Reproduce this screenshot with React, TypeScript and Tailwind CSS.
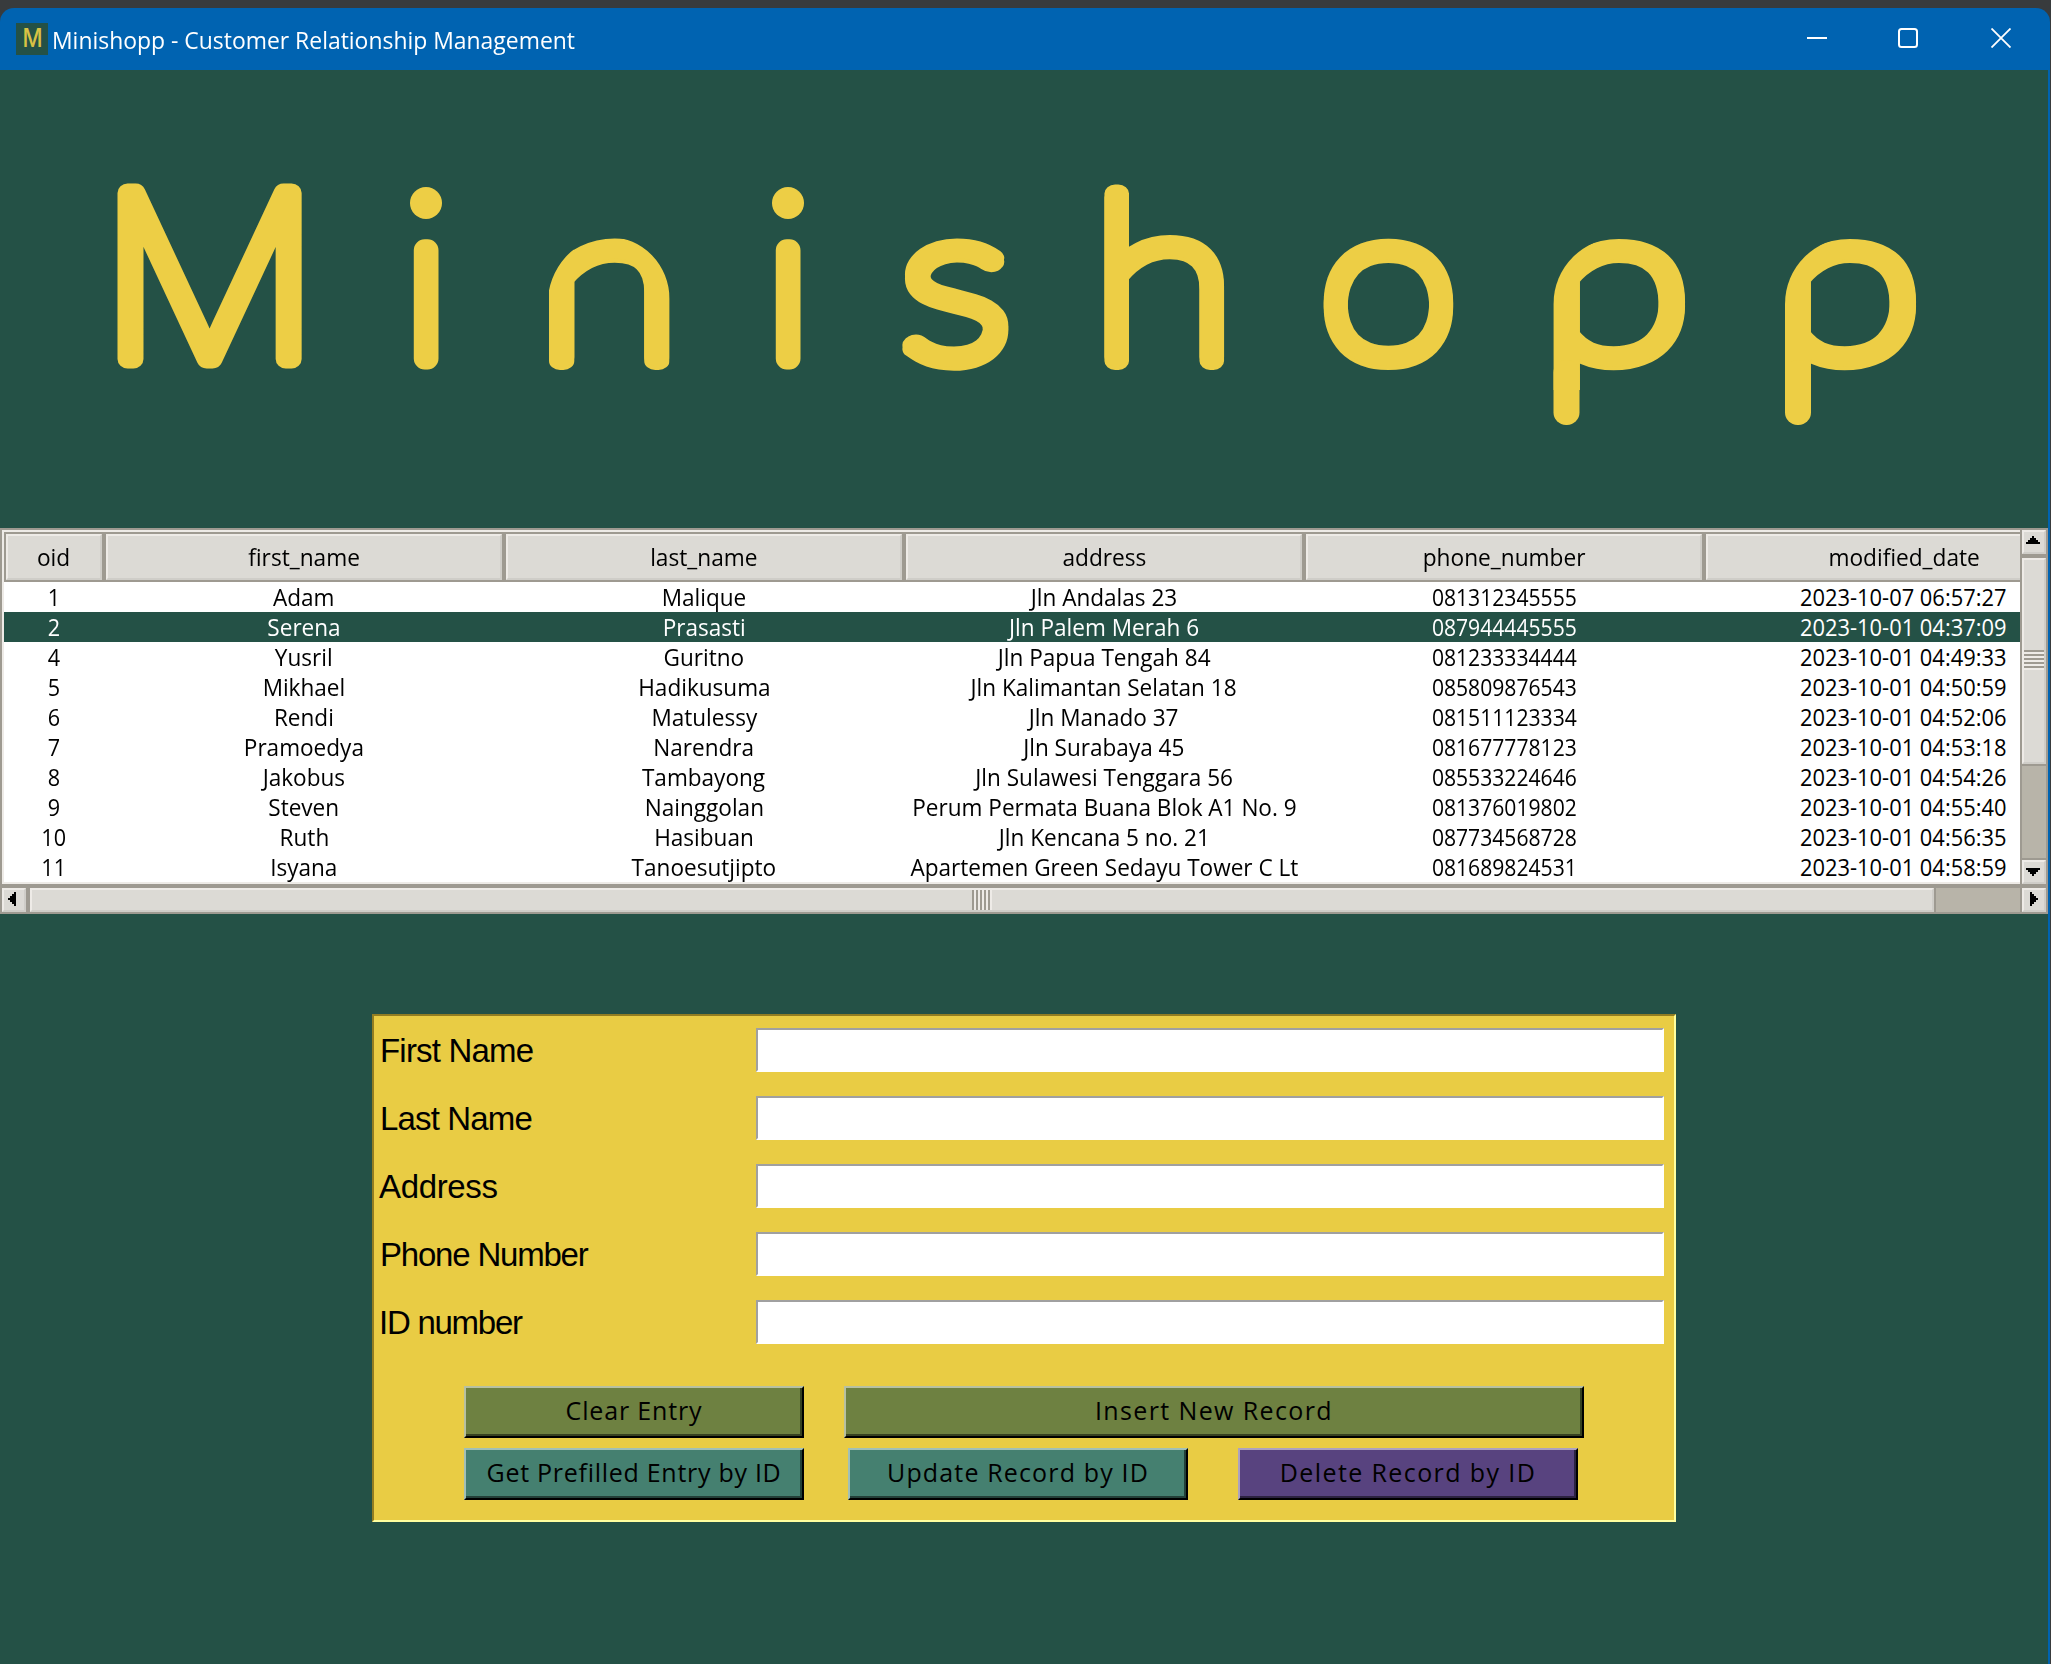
import React from "react";

const COLUMNS = ["oid", "first_name", "last_name", "address", "phone_number", "modified_date"];

const ROWS: string[][] = [
  ["1", "Adam", "Malique", "Jln Andalas 23", "081312345555", "2023-10-07 06:57:27"],
  ["2", "Serena", "Prasasti", "Jln Palem Merah 6", "087944445555", "2023-10-01 04:37:09"],
  ["4", "Yusril", "Guritno", "Jln Papua Tengah 84", "081233334444", "2023-10-01 04:49:33"],
  ["5", "Mikhael", "Hadikusuma", "Jln Kalimantan Selatan 18", "085809876543", "2023-10-01 04:50:59"],
  ["6", "Rendi", "Matulessy", "Jln Manado 37", "081511123334", "2023-10-01 04:52:06"],
  ["7", "Pramoedya", "Narendra", "Jln Surabaya 45", "081677778123", "2023-10-01 04:53:18"],
  ["8", "Jakobus", "Tambayong", "Jln Sulawesi Tenggara 56", "085533224646", "2023-10-01 04:54:26"],
  ["9", "Steven", "Nainggolan", "Perum Permata Buana Blok A1 No. 9", "081376019802", "2023-10-01 04:55:40"],
  ["10", "Ruth", "Hasibuan", "Jln Kencana 5 no. 21", "087734568728", "2023-10-01 04:56:35"],
  ["11", "Isyana", "Tanoesutjipto", "Apartemen Green Sedayu Tower C Lt", "081689824531", "2023-10-01 04:58:59"],
];

const CELL_SCALE = ["scale-x-[0.9]", "scale-x-[0.94]", "scale-x-[0.94]", "scale-x-[0.94]", "scale-x-[0.88]", "-translate-x-px scale-x-[0.912]"];

const GRID = "grid w-[2100px] grid-cols-[100px_400px_400px_400px_400px_400px]";
const RAISED = "border-2 border-t-[#eeebe7] border-l-[#eeebe7] border-r-[#cfcdc8] border-b-[#cfcdc8] bg-[#dcdad5]";

function TitleBar() {
  return (
    <header className="flex h-[62px] w-[2050px] shrink-0 items-center rounded-t-[14px] bg-[#0063b1] pl-4">
      <svg width="32" height="32" viewBox="0 0 32 32" className="shrink-0">
        <rect width="32" height="32" fill="#245146" />
        <text transform="translate(16.5 24) scale(0.88 1)" textAnchor="middle" fontFamily="Inter" fontSize="25" fontWeight="500" fill="#d8c244">M</text>
      </svg>
      <h1 className="mt-[2px] ml-1 origin-left scale-x-[0.955] text-[24px] leading-[32px] whitespace-pre text-white">
        Minishopp - Customer Relationship Management
      </h1>
      <div className="mr-[39px] ml-auto flex -translate-y-px text-white">
        <svg className="mr-[71px]" width="20" height="20" viewBox="0 0 20 20"><path d="M0 10H20" stroke="currentColor" strokeWidth="2" /></svg>
        <svg className="mr-[73px]" width="20" height="20" viewBox="0 0 20 20"><rect x="1" y="1" width="18" height="18" rx="2.5" fill="none" stroke="currentColor" strokeWidth="2" /></svg>
        <svg width="20" height="20" viewBox="0 0 20 20"><path d="M0.5 0.5L19.5 19.5M19.5 0.5L0.5 19.5" stroke="currentColor" strokeWidth="1.8" /></svg>
      </div>
    </header>
  );
}

type Letter = { c: string; x: number; y: number; size: number; sx: number; stroke: number; font?: string; clip?: string; tall?: boolean };

const LETTERS: Letter[] = [
  { c: "M", x: 209.5, y: 359, size: 228, sx: 1.075, stroke: 19, font: "Inter" },
  { c: "i", x: 426, y: 358, size: 220, sx: 1, stroke: 22, clip: "url(#stem)" },
  { c: "n", x: 608.5, y: 357, size: 220, sx: 1.226, stroke: 18, clip: "url(#arch)", tall: true },
  { c: "i", x: 788, y: 358, size: 220, sx: 1, stroke: 22, clip: "url(#stem)" },
  { c: "s", x: 955.5, y: 356, size: 218, sx: 1.24, stroke: 18, tall: true },
  { c: "h", x: 1163.5, y: 357, size: 227, sx: 1.186, stroke: 18, tall: true },
  { c: "o", x: 1388.5, y: 356, size: 217, sx: 1.168, stroke: 18, tall: true },
  { c: "p", x: 1615, y: 356, size: 217, sx: 1.283, stroke: 18, clip: "url(#bowl-a)", tall: true },
  { c: "p", x: 1846, y: 356, size: 217, sx: 1.283, stroke: 18, clip: "url(#bowl-b)", tall: true },
];

function Logo() {
  return (
    <svg width="2048" height="458" viewBox="0 70 2048 458" className="block shrink-0" role="img" aria-label="Minishopp">
      <defs>
        <clipPath id="stem"><rect x="380" y="228" width="460" height="160" /></clipPath>
        <clipPath id="arch"><path d="M547.5 440V305A62 68 0 0 1 609.5 237A60 62 0 0 1 669.5 299V440Z" /></clipPath>
        <clipPath id="bowl-a"><path d="M1553.5 390V304A66.5 66.5 0 0 1 1620 237.5H1700V390Z" /></clipPath>
        <clipPath id="bowl-b"><path d="M1785 390V304A66.5 66.5 0 0 1 1851.5 237.5H1930V390Z" /></clipPath>
      </defs>
      <g fontFamily="Lato" fontWeight="100" fill="#edce45" stroke="#edce45" strokeLinejoin="round" strokeLinecap="round" textAnchor="middle">
        {LETTERS.map((l, i) => (
          <g key={i} clipPath={l.clip}>
            <g className={l.tall ? "[filter:drop-shadow(0_4px_0_#edce45)]" : ""}>
              <text transform={`translate(${l.x} ${l.y}) scale(${l.sx} 1)`} fontSize={l.size} fontFamily={l.font} strokeWidth={l.stroke}>{l.c}</text>
            </g>
          </g>
        ))}
      </g>
      <g fill="#edce45">
        <circle cx="426" cy="203" r="16" />
        <circle cx="788" cy="203" r="16" />
        <rect x="1553.5" y="360" width="26" height="65" rx="12.5" />
        <rect x="1785" y="360" width="26" height="65" rx="12.5" />
      </g>
    </svg>
  );
}

function HeaderCell({ label }: { label: string }) {
  return (
    <div className="border-2 border-[#9e9a91]">
      <div className={`flex h-[46px] items-center justify-center ${RAISED}`}>
        <span className="inline-block scale-x-[0.945] leading-[30px] whitespace-pre">{label}</span>
      </div>
    </div>
  );
}

function ScrollButton({ path }: { path: string }) {
  return (
    <div className={`flex size-6 shrink-0 items-center justify-center ${RAISED}`}>
      <svg width="16" height="16" viewBox="0 0 16 16" className="shrink-0"><path d={path} fill="#000" /></svg>
    </div>
  );
}

function VerticalScrollbar() {
  return (
    <div className="flex h-[358px] w-7 shrink-0 flex-col border-2 border-[#9e9a91] bg-[#b8b4a9]">
      <ScrollButton path="M0 10V8H2V6H4V4H6V2H8V4H10V6H12V8H14V10Z" />
      <div className="h-[2px] bg-[#9e9a91]" />
      <div className="h-[2px] bg-[#9e9a91]" />
      <div className={`flex h-[206px] flex-col items-stretch justify-center gap-[2px] pb-1 ${RAISED}`}>
        {[0, 1, 2, 3, 4].map((n) => (
          <div key={n} className="h-[2px] bg-[#9e9a91] shadow-[0_2px_0_#eeebe7]" />
        ))}
      </div>
      <div className="h-[2px] bg-[#9e9a91]" />
      <div className="flex-1" />
      <div className="h-[2px] bg-[#9e9a91]" />
      <ScrollButton path="M0 4H14V6H12V8H10V10H8V12H6V10H4V8H2V6H0Z" />
    </div>
  );
}

function HorizontalScrollbar() {
  return (
    <div className="flex h-7 w-[2048px] shrink-0 border-2 border-[#9e9a91] bg-[#b8b4a9]">
      <ScrollButton path="M10 0V14H8V12H6V10H4V8H2V6H4V4H6V2H8V0Z" />
      <div className="w-1 bg-[#9e9a91]" />
      <div className={`flex w-[1904px] items-stretch justify-center gap-[2px] pr-[2px] ${RAISED}`}>
        {[0, 1, 2, 3, 4].map((n) => (
          <div key={n} className="w-[2px] bg-[#9e9a91] shadow-[2px_0_0_#eeebe7]" />
        ))}
      </div>
      <div className="w-[2px] bg-[#9e9a91]" />
      <div className="flex-1" />
      <div className="w-[2px] bg-[#9e9a91]" />
      <ScrollButton path="M4 0V14H6V12H8V10H10V8H12V6H10V4H8V2H6V0Z" />
    </div>
  );
}

function RecordTable() {
  return (
    <section className="w-[2048px] shrink-0 text-[24px] text-black">
      <div className="flex">
        <div className="h-[358px] w-[2020px] overflow-hidden border-y-2 border-l-2 border-[#9e9a91] bg-white">
          <div className="h-[354px] overflow-hidden border-y-2 border-l-2 border-[#eeebe7]">
            <div className={GRID}>
              {COLUMNS.map((c) => <HeaderCell key={c} label={c} />)}
            </div>
            {ROWS.map((row) => (
              <div key={row[0]} className={`${GRID} h-[30px] ${row[0] === "2" ? "bg-[#245146] text-white" : "bg-white"}`}>
                {row.map((value, i) => (
                  <div key={i} className="flex justify-center">
                    <span className={`inline-block leading-[30px] whitespace-pre ${CELL_SCALE[i]}`}>{value}</span>
                  </div>
                ))}
              </div>
            ))}
          </div>
        </div>
        <VerticalScrollbar />
      </div>
      <HorizontalScrollbar />
    </section>
  );
}

const FIELDS = [
  { label: "First Name", style: "pl-[6px] tracking-[-0.8px]" },
  { label: "Last Name", style: "pl-[6px] tracking-[-0.85px]" },
  { label: "Address", style: "pl-[5px] tracking-[-0.35px]" },
  { label: "Phone Number", style: "pl-[6px] tracking-[-1.2px]" },
  { label: "ID number", style: "pl-[5px] tracking-[-1.25px]" },
];

const BUTTON = "flex h-[52px] items-center justify-center border-2 border-r-black border-b-black";
const BUTTON_FACE = "flex size-full items-center justify-center border-r-2 border-b-2 pl-[2px] text-[25px] whitespace-pre text-black";

function EntryForm() {
  return (
    <form className="mt-[100px] ml-[372px] h-[508px] w-[1304px] shrink-0 border-2 border-t-[#927d22] border-l-[#927d22] border-r-[#ffff9f] border-b-[#ffff9f] bg-[#e9cc44] pt-3">
      <div className="flex flex-col gap-6">
        {FIELDS.map(({ label, style }) => (
          <label key={label} className="flex h-11 items-center">
            <span className={`w-[382px] pt-[2px] font-['Liberation_Sans',sans-serif] text-[33px] leading-[44px] whitespace-pre text-black ${style}`}>{label}</span>
            <input className="h-11 w-[908px] border-2 border-t-[#a0a0a0] border-l-[#a0a0a0] border-r-white border-b-white bg-white outline-none" />
          </label>
        ))}
      </div>
      <div className="mt-[42px] ml-[90px] flex gap-10">
        <button type="button" className={`${BUTTON} w-[340px] border-t-[#b7c0a2] border-l-[#b7c0a2] bg-[#6e8141]`}>
          <span className={`${BUTTON_FACE} border-[#374121] tracking-[0.85px]`}>Clear Entry</span>
        </button>
        <button type="button" className={`${BUTTON} w-[740px] border-t-[#b7c0a2] border-l-[#b7c0a2] bg-[#6e8141]`}>
          <span className={`${BUTTON_FACE} border-[#374121] tracking-[1.38px]`}>Insert New Record</span>
        </button>
      </div>
      <div className="mt-[10px] ml-[90px] flex">
        <button type="button" className={`${BUTTON} w-[340px] border-t-[#a2c0b8] border-l-[#a2c0b8] bg-[#458070]`}>
          <span className={`${BUTTON_FACE} border-[#234038] tracking-[0.72px]`}>Get Prefilled Entry by ID</span>
        </button>
        <button type="button" className={`${BUTTON} ml-11 w-[340px] border-t-[#a2c0b8] border-l-[#a2c0b8] bg-[#458070]`}>
          <span className={`${BUTTON_FACE} border-[#234038] tracking-[1.15px]`}>Update Record by ID</span>
        </button>
        <button type="button" className={`${BUTTON} ml-[50px] w-[340px] border-t-[#aca2c0] border-l-[#aca2c0] bg-[#58437f]`}>
          <span className={`${BUTTON_FACE} border-[#2c2240] tracking-[1.4px]`}>Delete Record by ID</span>
        </button>
      </div>
    </form>
  );
}

export default function App() {
  return (
    <div className="flex h-[1664px] w-[2051px] flex-col overflow-hidden bg-[#383b3d] pt-2 font-['Open_Sans',sans-serif]">
      <TitleBar />
      <main className="flex w-[2050px] flex-1 flex-col border-r-2 border-[#0063b1] bg-[#245146]">
        <Logo />
        <RecordTable />
        <EntryForm />
      </main>
    </div>
  );
}
